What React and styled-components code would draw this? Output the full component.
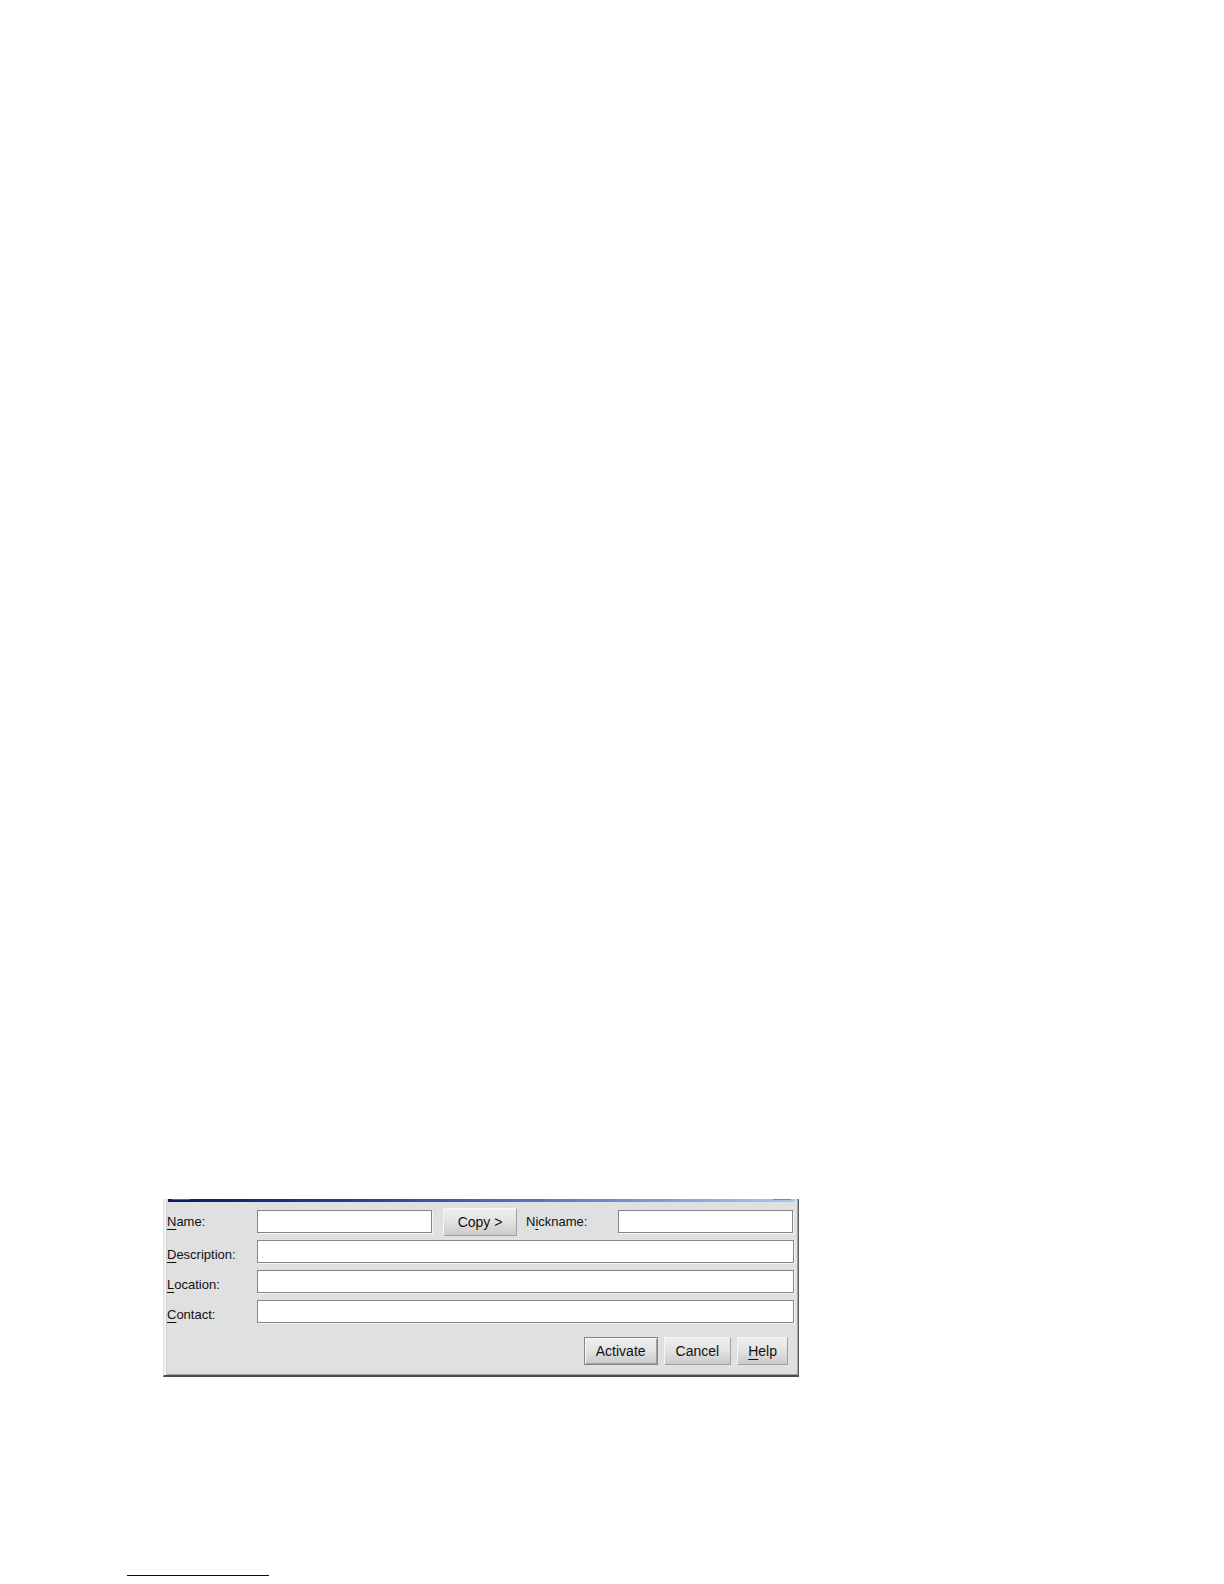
import React, {Component} from 'react';
import styled, {createGlobalStyle} from 'styled-components';


const GlobalStyle = createGlobalStyle`
* {
    box-sizing: border-box;
}
body {
    margin: 0;
    background: #fff;
    color: #111;
    font-family: "Liberation Sans", Arial, sans-serif;
}
`;

const Page = styled.main`
display: flex;
flex-direction: column;
justify-content: flex-end;
min-height: 100vh;
padding: 0 0 8px 127px;
`;

const Window = styled.section`
width: 100%;
max-width: 636px;
margin: 0 0 198px 36px;
background: #e0e0e0;
border-left: 1px solid #dedede;
border-right: 1px solid #5c5c5c;
border-bottom: 2px solid #4c4c4c;
box-shadow: inset 2px 0 #f4f4f4, inset 3px 0 #cfcfcf, inset -1px -1px #a2a2a2;
`;

const TitleStrip = styled.div`
display: flex;
justify-content: space-between;
height: 3px;
margin: 0 3px 0 4px;
padding: 0 4px;
background: linear-gradient(to right, #0a1c5c, #23418a 30%, #6482c0 65%, #a6caf0);
`;

const StripEdge = styled.span`
width: 18px;
height: 1px;
background: ${props => props.$color};
`;

const Form = styled.form`
padding: 6px 4px 10px 3px;
`;

const Row = styled.div`
display: flex;
align-items: ${props => props.$split ? 'center' : 'flex-start'};
height: ${props => props.$split ? '27px' : '30px'};
margin-bottom: ${props => props.$split ? '5px' : '0'};
padding-right: ${props => props.$split ? '1px' : '0'};
`;

const Label = styled.label`
flex: none;
align-self: center;
width: ${props => props.$wide ? '92px' : '90px'};
font-size: 13px;
line-height: 16px;
`;

const Mnemonic = styled.span`
text-decoration: underline;
text-decoration-thickness: 1px;
text-decoration-skip-ink: none;
text-underline-offset: 3px;
`;

const Field = styled.input`
flex: 1;
min-width: 0;
height: 23px;
padding: 0 4px;
border: 1px solid #858585;
border-radius: 0;
background: #fff;
box-shadow: 1px 1px #f6f6f6;
font: inherit;
font-size: 13px;
outline: none;
`;

const Button = styled.button`
height: 28px;
padding: ${props => props.$tight ? '0 10px' : '0 11px'};
border: 1px solid;
border-color: ${props => props.$main ? '#858585' : '#f6f6f6 #a0a0a0 #a0a0a0 #f6f6f6'};
background: linear-gradient(#efefef, #e2e2e2 50%, #cacaca);
box-shadow: ${props => props.$main ? 'inset 1px 1px #fafafa, inset -1px -1px #a0a0a0' : 'none'};
color: #111;
font: inherit;
font-size: 14px;
line-height: 16px;
`;

const CopyButton = styled(Button)`
flex: none;
width: 74px;
margin: 0 9px 0 11px;
`;

const Buttons = styled.div`
display: flex;
justify-content: flex-end;
gap: 6px;
padding: 7px 6px 0 0;
`;

const FootRule = styled.hr`
width: 142px;
height: 1px;
margin: 0;
border: 0;
background: #00007c;
`;


const details = [
    {id: 'description', first: 'D', rest: 'escription:'},
    {id: 'location', first: 'L', rest: 'ocation:'},
    {id: 'contact', first: 'C', rest: 'ontact:'},
];


class App extends Component {
    constructor(props) {
        super(props);
        this.state = {
            name: '',
            nickname: '',
            description: '',
            location: '',
            contact: '',
        }
    }

    setValue = (event) => {
        this.setState({[event.target.id]: event.target.value})
    }

    copyName = () => {
        this.setState(prevState => ({nickname: prevState.name}))
    }

    render() {
        return (
            <>
                <GlobalStyle />
                <Page>
                    <Window>
                        <TitleStrip>
                            <StripEdge $color="#5c6480" />
                            <StripEdge $color="#7c8ca0" />
                        </TitleStrip>
                        <Form onSubmit={(event) => event.preventDefault()}>
                            <Row $split>
                                <Label htmlFor="name"><Mnemonic>N</Mnemonic>ame:</Label>
                                <Field id="name" value={this.state.name} onChange={this.setValue} />
                                <CopyButton type="button" onClick={this.copyName}>Copy &gt;</CopyButton>
                                <Label htmlFor="nickname" $wide>N<Mnemonic>i</Mnemonic>ckname:</Label>
                                <Field id="nickname" value={this.state.nickname} onChange={this.setValue} />
                            </Row>
                            {details.map(item => (
                                <Row key={item.id}>
                                    <Label htmlFor={item.id}><Mnemonic>{item.first}</Mnemonic>{item.rest}</Label>
                                    <Field id={item.id} value={this.state[item.id]} onChange={this.setValue} />
                                </Row>
                            ))}
                            <Buttons>
                                <Button type="submit" $main>Activate</Button>
                                <Button type="button">Cancel</Button>
                                <Button type="button" $tight><Mnemonic>H</Mnemonic>elp</Button>
                            </Buttons>
                        </Form>
                    </Window>
                    <FootRule />
                </Page>
            </>
        )
    }
}

export default App;
